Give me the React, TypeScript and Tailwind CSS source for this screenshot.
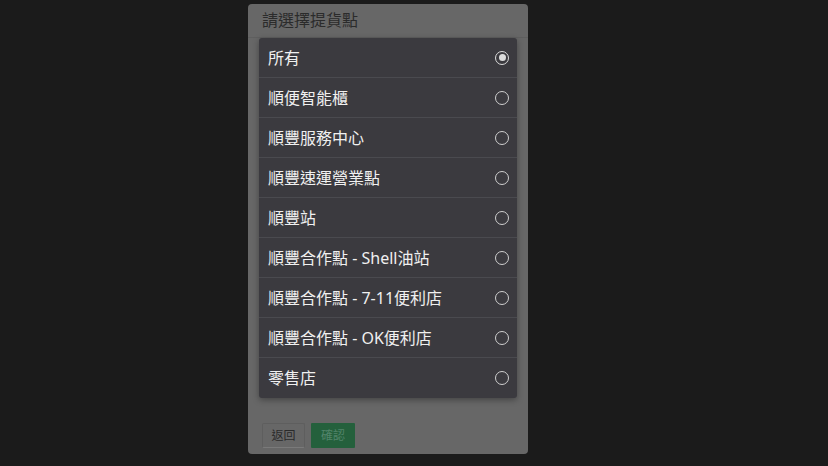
import React from "react";

const items = [
  "所有",
  "順便智能櫃",
  "順豐服務中心",
  "順豐速運營業點",
  "順豐站",
  "順豐合作點 - Shell油站",
  "順豐合作點 - 7-11便利店",
  "順豐合作點 - OK便利店",
  "零售店",
];

export default function App() {
  return (
    <div
      className="w-[828px] h-[466px] bg-[#1b1b1b] flex overflow-hidden"
      style={{ fontFamily: '"Noto Sans", "Noto Sans CJK TC", sans-serif' }}
    >
      <div className="mt-[4px] ml-[248px] w-[280px] h-[450px] bg-[#676767] rounded-[4px] flex flex-col">
        <div className="h-[34px] px-[14px] pb-[2px] flex items-center text-[16px] text-[#2b2b2b] border-b border-[#5f5f5f]">
          請選擇提貨點
        </div>
        <div className="mx-[11px] bg-[#3b3a3f] rounded-[3px] shadow-[0_2px_6px_rgba(0,0,0,0.35)] flex flex-col">
          {items.map((t, i) => (
            <div
              key={t}
              className={`h-[40px] flex items-center justify-between pl-[9px] pr-[8px] ${
                i < items.length - 1 ? "border-b border-[#4a4a4f]" : ""
              }`}
            >
              <span className="text-[16px] text-[#f0f0f0]">{t}</span>
              {i === 0 ? (
                <span className="w-[14px] h-[14px] rounded-full border-[1.5px] border-[#dcdcdc] flex items-center justify-center">
                  <span className="w-[7px] h-[7px] rounded-full bg-[#dcdcdc]" />
                </span>
              ) : (
                <span className="w-[14px] h-[14px] rounded-full border-[1.5px] border-[#cfcfcf]" />
              )}
            </div>
          ))}
        </div>
        <div className="flex gap-[6px] px-[14px] mt-[25px]">
          <div className="w-[43px] h-[25px] border border-[#5e5e5e] border-b-[#7a7a7a] border-b-dotted rounded-[2px] flex items-center justify-center text-[12px] text-[#2a2a2a]">
            返回
          </div>
          <div className="w-[44px] h-[25px] bg-[#24603c] rounded-[1px] flex items-center justify-center text-[12px] text-[#52846a]">
            確認
          </div>
        </div>
      </div>
    </div>
  );
}
